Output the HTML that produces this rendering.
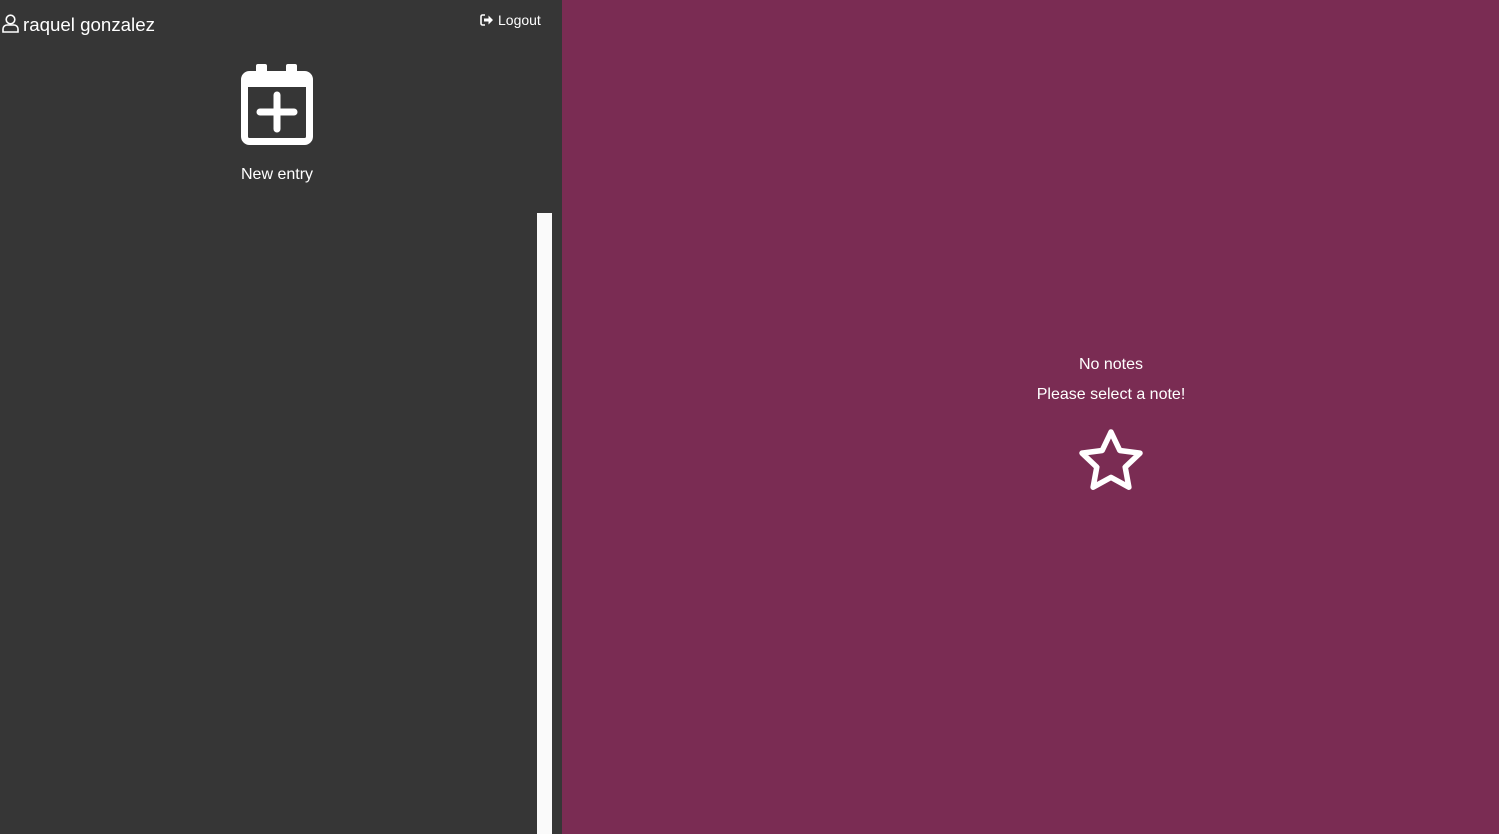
<!DOCTYPE html>
<html><head><style>
html,body{margin:0;padding:0;width:1499px;height:834px;overflow:hidden;font-family:"Liberation Sans",Arial,sans-serif;color:#fff}
.l{position:absolute;left:0;top:0;width:562px;height:834px;background:#363636}
.r{position:absolute;left:562px;top:0;width:937px;height:834px;background:#7a2c53}
.sb{position:absolute;left:537px;top:213px;width:15px;height:621px;background:#fafafa}
.t{position:absolute;white-space:nowrap}
</style></head><body>
<div class="l">
<svg class="t" style="left:2px;top:14px" width="17" height="19" viewBox="0 0 17 19" fill="none" stroke="#fff" stroke-width="1.6"><circle cx="8.5" cy="5.5" r="4.3"/><path d="M1 18v-3a4 4 0 0 1 4-4h7a4 4 0 0 1 4 4v3z"/></svg>
<div class="t" style="left:23px;top:14px;font-size:18.7px">raquel gonzalez</div>
<svg class="t" style="left:480px;top:14px" width="14" height="12" viewBox="0 0 14 12"><path d="M5 1H2.5A1.5 1.5 0 0 0 1 2.5v7A1.5 1.5 0 0 0 2.5 11H5" fill="none" stroke="#fff" stroke-width="1.6"/><path d="M4 4.5h4.5V1.5L13 6l-4.5 4.5v-3H4z" fill="#fff"/></svg>
<div class="t" style="left:498px;top:12px;font-size:14px">Logout</div>
<svg class="t" style="left:241px;top:64px" width="72" height="81" viewBox="0 0 72 81"><rect x="15" y="0" width="11" height="14" rx="2" fill="#fff"/><rect x="45" y="0" width="11" height="14" rx="2" fill="#fff"/><rect x="3.5" y="10.5" width="65" height="67" rx="5" fill="none" stroke="#fff" stroke-width="7"/><rect x="3" y="10" width="66" height="13" fill="#fff"/><path d="M36 31v34M19 48h34" stroke="#fff" stroke-width="7" stroke-linecap="round"/></svg>
<div class="t" style="left:241px;top:166px;font-size:16px">New entry</div>
<div class="sb"></div>
</div>
<div class="r">
<div class="t" style="left:0;width:1098px;text-align:center;top:356px;font-size:16px">No notes</div>
<div class="t" style="left:0;width:1098px;text-align:center;top:386px;font-size:16px">Please select a note!</div>
<svg class="t" style="left:514px;top:428px" width="70" height="68" viewBox="0 0 70 68"><path d="M35 4l8.8 18.5 20.2 2.6-14.8 14 3.7 20.1L35 49.4l-17.9 9.8 3.7-20.1L6 25.1l20.2-2.6z" fill="none" stroke="#fff" stroke-width="5.5" stroke-linejoin="round"/></svg>
</div>
</body></html>
